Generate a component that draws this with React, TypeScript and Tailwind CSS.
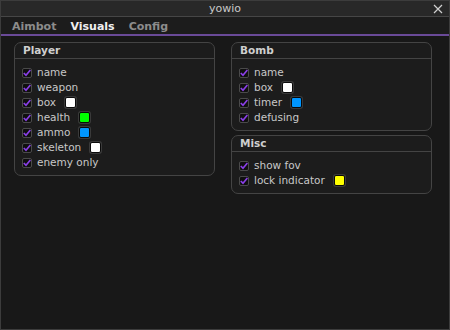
import React from "react";

const Check = () => (
  <div className="w-[10px] h-[10px] rounded-[2px] border border-[#4a4a4a] bg-[#0f0f0f] flex items-center justify-center shrink-0">
    <svg width="8" height="8" viewBox="0 0 8 8">
      <path d="M0.8 4 L3 6.3 L7.4 1" stroke="#8a3fe8" strokeWidth="1.7" fill="none" />
    </svg>
  </div>
);

const Swatch = ({ color }: { color: string }) => (
  <div className="w-[11px] h-[11px] rounded-[2px] border border-[#0a0a0a] ring-1 ring-[#3a3a3a] shrink-0" style={{ background: color }} />
);

type Item = { label: string; color?: string };

const Row = ({ item }: { item: Item }) => (
  <div className="flex items-center h-[15px]">
    <Check />
    <span className="ml-[5px] text-[10.5px] text-[#c8c8c8] leading-none">{item.label}</span>
    {item.color && (
      <div className="ml-[9px]">
        <Swatch color={item.color} />
      </div>
    )}
  </div>
);

const Panel = ({ title, items }: { title: string; items: Item[] }) => (
  <div className="w-[201px] rounded-[7px] border border-[#444444] bg-[#1c1c1c]">
    <div className="h-[16px] border-b border-[#444444] px-[8px] flex items-center text-[10.5px] font-bold text-[#cfcfcf]">
      {title}
    </div>
    <div className="px-[7px] pt-[6px] pb-[5px] flex flex-col">
      {items.map((it) => (
        <Row key={it.label} item={it} />
      ))}
    </div>
  </div>
);

export default function App() {
  return (
    <div
      className="w-[450px] h-[330px] bg-[#181818] border border-[#3c3c3c] flex flex-col"
      style={{ fontFamily: '"DejaVu Sans", Verdana, sans-serif' }}
    >
      <div className="h-[16px] bg-[#282828] border-b border-[#464646] flex items-center justify-center relative shrink-0">
        <span className="text-[11px] text-[#c8c8c8] leading-none">yowio</span>
        <svg className="absolute right-[6px] top-[3px]" width="10" height="10" viewBox="0 0 10 10">
          <path d="M1 1 L9 9 M9 1 L1 9" stroke="#d0d0d0" strokeWidth="1.2" />
        </svg>
      </div>
      <div className="h-[17px] bg-[#1c1c1c] flex items-center pl-[11px] pt-[2px] gap-[14px] shrink-0 text-[11px] font-bold leading-none">
        <span className="text-[#8c8c8c]">Aimbot</span>
        <span className="text-[#f0f0f0]">Visuals</span>
        <span className="text-[#8c8c8c]">Config</span>
      </div>
      <div className="h-[2px] bg-[#6a4a98] shrink-0" />
      <div className="flex items-start gap-[16px] pl-[13px] pt-[6px]">
        <Panel
          title="Player"
          items={[
            { label: "name" },
            { label: "weapon" },
            { label: "box", color: "#ffffff" },
            { label: "health", color: "#00ff00" },
            { label: "ammo", color: "#0096ff" },
            { label: "skeleton", color: "#ffffff" },
            { label: "enemy only" },
          ]}
        />
        <div className="flex flex-col gap-[4px]">
          <Panel
            title="Bomb"
            items={[
              { label: "name" },
              { label: "box", color: "#ffffff" },
              { label: "timer", color: "#0096ff" },
              { label: "defusing" },
            ]}
          />
          <Panel
            title="Misc"
            items={[{ label: "show fov" }, { label: "lock indicator", color: "#ffff00" }]}
          />
        </div>
      </div>
    </div>
  );
}
